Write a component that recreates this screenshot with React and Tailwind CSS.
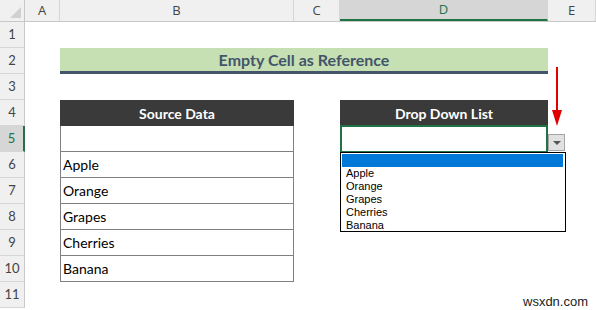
import React from 'react';

const cols = [
  { key: 'A', w: 'w-[35px]' },
  { key: 'B', w: 'w-[234px]' },
  { key: 'C', w: 'w-[46px]' },
  { key: 'D', w: 'w-[208px]' },
  { key: 'E', w: 'w-[48px]' },
];

const fruits = ['Apple', 'Orange', 'Grapes', 'Cherries', 'Banana'];

function RowHead({ n, active }) {
  return (
    <div
      className={`w-[25px] shrink-0 h-full flex items-center justify-center text-[13px] border-b border-[#d6d6d6] ${
        active
          ? 'bg-[#d6d6d6] text-[#217346] border-r-2 border-r-[#217346]'
          : 'bg-[#f0f0f0] text-[#444] border-r border-r-[#c8c8c8]'
      }`}
    >
      {n}
    </div>
  );
}

function Row({ n, active, children }) {
  return (
    <div className="flex h-[26px]">
      <RowHead n={n} active={active} />
      {children}
    </div>
  );
}

export default function App() {
  return (
    <div className="relative w-[596px] h-[310px] overflow-hidden bg-white font-['Lato','Open_Sans',sans-serif]">
      {/* column headers */}
      <div className="flex h-[22px] bg-[#f0f0f0] border-b border-[#c8c8c8] text-[13px] text-[#444] font-['Open_Sans',sans-serif]">
        <div className="relative w-[25px] shrink-0 border-r border-[#c8c8c8]">
          <div className="absolute right-[3px] bottom-[3px] w-0 h-0 border-l-[11px] border-l-transparent border-b-[11px] border-b-[#d0d0d0]" />
        </div>
        {cols.map((c) => (
          <div
            key={c.key}
            className={`${c.w} shrink-0 flex items-center justify-center border-r border-[#d6d6d6] ${
              c.key === 'D' ? 'bg-[#d6d6d6] text-[#217346] border-b-2 border-b-[#217346]' : ''
            }`}
          >
            {c.key}
          </div>
        ))}
      </div>

      <Row n={1} />
      <Row n={2}>
        <div className="w-[35px] shrink-0" />
        <div className="w-[488px] shrink-0 bg-[#c6e0b4] border-b-[3px] border-[#44546a] flex items-center justify-center text-[16px] font-bold text-[#44546a]">
          Empty Cell as Reference
        </div>
      </Row>
      <Row n={3} />
      <Row n={4}>
        <div className="w-[35px] shrink-0" />
        <div className="w-[234px] shrink-0 bg-[#3a3a3a] text-white font-bold text-[14px] flex items-center justify-center">
          Source Data
        </div>
        <div className="w-[46px] shrink-0" />
        <div className="w-[208px] shrink-0 bg-[#3a3a3a] text-white font-bold text-[14px] flex items-center justify-center">
          Drop Down List
        </div>
      </Row>
      <Row n={5} active>
        <div className="w-[35px] shrink-0" />
        <div className="w-[234px] shrink-0 border-x border-b border-[#808080]" />
        <div className="w-[46px] shrink-0" />
        <div className="w-[208px] shrink-0 border-2 border-[#217346] -mt-[1px] h-[28px]" />
      </Row>
      {fruits.map((f, i) => (
        <Row key={f} n={6 + i}>
          <div className="w-[35px] shrink-0" />
          <div className="w-[234px] shrink-0 border-x border-b border-[#808080] flex items-center pl-[2px] text-[14px] text-black">
            {f}
          </div>
        </Row>
      ))}
      <Row n={11} />

      {/* red arrow */}
      <div className="absolute left-[556px] top-[67px] w-[2px] h-[45px] bg-[#e00000]" />
      <div className="absolute left-[552px] top-[110px] w-0 h-0 border-x-[5px] border-x-transparent border-t-[16px] border-t-[#e00000]" />

      {/* dropdown button */}
      <div className="absolute left-[548px] top-[134px] w-[17px] h-[17px] bg-[#e1e1e1] border border-[#a6a6a6] flex items-center justify-center">
        <div className="w-0 h-0 border-x-[4px] border-x-transparent border-t-[4px] border-t-[#555]" />
      </div>

      {/* dropdown list */}
      <div className="absolute left-[340px] top-[152px] w-[226px] h-[80px] bg-white border border-black pt-[1px] pl-[1px] pr-[2px] font-['Liberation_Sans',sans-serif] text-[11px] text-black leading-[13px]">
        <div className="h-[13px] bg-[#0078d7]" />
        {fruits.map((f) => (
          <div key={f} className="h-[13px] pl-[4px]">
            {f}
          </div>
        ))}
      </div>

      <div className="absolute left-[523px] top-[292px] text-[13px] text-[#222] font-['Liberation_Sans',sans-serif]">
        wsxdn.com
      </div>
    </div>
  );
}
